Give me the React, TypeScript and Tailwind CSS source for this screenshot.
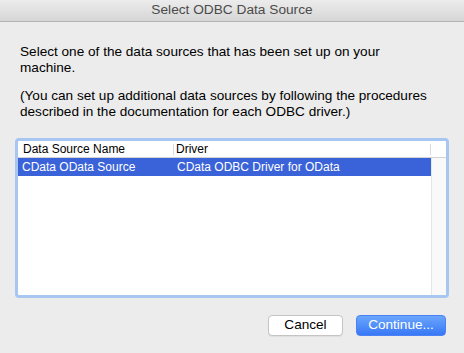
import React from 'react';

const rows = [{ name: 'CData OData Source', driver: 'CData ODBC Driver for OData' }];

export default function App() {
  return (
    <div
      className="w-[464px] h-[353px] bg-[#ececec] flex flex-col text-black"
      style={{ fontFamily: '"Liberation Sans", Arial, sans-serif' }}
    >
      {/* Title bar */}
      <div className="h-[22px] flex items-center justify-center bg-gradient-to-b from-[#ececec] to-[#d6d6d6] border-b border-[#b3b3b3] text-[13.7px] text-[#4b4b4b]">
        Select ODBC Data Source
      </div>

      {/* Messages */}
      <div className="px-5 pt-[22px] text-[13.6px] leading-[16px]">
        <p>
          Select one of the data sources that has been set up on your
          <br />
          machine.
        </p>
        <p className="mt-3">
          (You can set up additional data sources by following the procedures
          <br />
          described in the documentation for each ODBC driver.)
        </p>
      </div>

      {/* Table with focus ring */}
      <div className="mx-[15px] mt-[18px] h-[160px] rounded-[4px] border-[3px] border-[#a8c6f2] bg-white flex flex-col text-[12px]">
        <div className="h-[17px] flex items-center border-b border-[#d3d3d3]">
          <div className="w-[156px] pl-[5px] border-r border-[#dadada] h-[11px] flex items-center">Data Source Name</div>
          <div className="flex-1 pl-[2px] border-r border-[#dadada] h-[11px] flex items-center">Driver</div>
          <div className="w-[15px]" />
        </div>
        <div className="flex-1 flex">
          <div className="flex-1 flex flex-col">
            {rows.map((r) => (
              <div key={r.name} className="h-[18px] flex items-center bg-[#3a63d9] text-white">
                <div className="w-[156px] pl-[4px]">{r.name}</div>
                <div className="flex-1 pl-[3px]">{r.driver}</div>
              </div>
            ))}
          </div>
          <div className="w-[15px] bg-[#f9f9f9] border-l border-[#e6e6e6]" />
        </div>
      </div>

      {/* Buttons */}
      <div className="flex justify-end gap-[13px] pr-[18px] mt-[17px] text-[13.6px]">
        <button className="w-[75px] h-[21px] rounded-[4px] bg-white border border-[#c4c4c4] shadow-[0_1px_0_rgba(0,0,0,0.05)] flex items-center justify-center">
          Cancel
        </button>
        <button className="w-[90px] h-[21px] rounded-[4px] bg-gradient-to-b from-[#6ba5fc] to-[#3877f6] border border-[#4a82f3] text-white flex items-center justify-center">
          Continue...
        </button>
      </div>
    </div>
  );
}
